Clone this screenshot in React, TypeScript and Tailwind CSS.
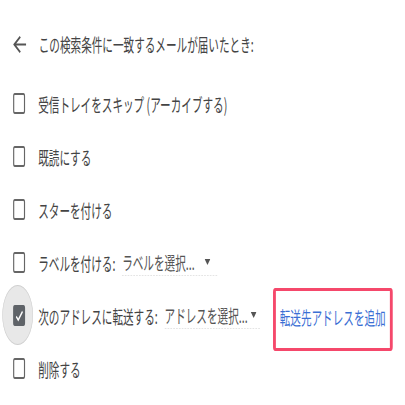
import React from "react";

const font = { fontFamily: '"Noto Sans CJK JP", "Noto Sans", sans-serif' };

const Box = () => (
  <div className="ml-[23px] w-[21px] h-[21px] rounded-[3px] border-2 border-[#666]" />
);

const Dropdown = ({ text, arrowGap }: { text: string; arrowGap: string }) => (
  <div className="flex items-center w-[167px] h-[26px] border-b border-dashed border-[#ddd] box-content">
    <span className="text-[#555]">{text}</span>
    <svg width="10" height="6" viewBox="0 0 10 6" className={`ml-auto ${arrowGap}`}>
      <path d="M0 0 L10 0 L5 6 Z" fill="#555" />
    </svg>
  </div>
);

const rows = ["受信トレイをスキップ (アーカイブする)", "既読にする", "スターを付ける"];

export default function App() {
  return (
    <div className="w-[405px] h-[405px] overflow-hidden bg-white">
      <div
        className="w-[710px] origin-top-left scale-x-[0.57] text-[18.6px] leading-[26px] text-[#444]"
        style={font}
      >
        {/* Header */}
        <div className="mt-[24px] h-[40px] flex items-center">
          <svg
            width="23"
            height="17"
            viewBox="0 0 16 16"
            preserveAspectRatio="none"
            className="ml-[23px]"
          >
            <path d="M16 7H3.8l5.6-5.6L8 0 0 8l8 8 1.4-1.4L3.8 9H16z" fill="#555" />
          </svg>
          <span className="ml-[22px]">この検索条件に一致するメールが届いたとき:</span>
        </div>

        {/* Actions */}
        <div className="mt-[13px] flex flex-col">
          {rows.map((r) => (
            <div key={r} className="h-[53px] flex items-center">
              <Box />
              <span className="ml-[23px]">{r}</span>
            </div>
          ))}

          <div className="h-[53px] flex items-center">
            <Box />
            <span className="ml-[23px]">ラベルを付ける:</span>
            <div className="ml-[12px]">
              <Dropdown text="ラベルを選択..." arrowGap="mr-[12px]" />
            </div>
          </div>

          <div className="h-[53px] flex items-center">
            <div className="relative w-[67px] h-full flex items-center">
              <div className="absolute left-[4px] top-[-4px] w-[54px] h-[60px] rounded-[50%] bg-[#e8e8e8] border border-[#cfcfcf]" />
              <div className="relative ml-[23px] w-[21px] h-[21px] rounded-[3px] bg-[#5f6368] flex items-center justify-center">
                <svg width="14" height="12" viewBox="0 0 14 12">
                  <path d="M1.5 6.5 L5 10 L12.5 1.5" stroke="#fff" strokeWidth="2" fill="none" />
                </svg>
              </div>
            </div>
            <span>次のアドレスに転送する:</span>
            <div className="ml-[12px]">
              <Dropdown text="アドレスを選択..." arrowGap="mr-[6px]" />
            </div>
            <div className="self-start mt-[-1px] ml-[23px] w-[210px] h-[63px] rounded-[4px] border-y-[3px] border-x-[5px] border-[#f5486b] pl-[7px] pt-[13px]">
              <span className="text-[#3b6fd4]">転送先アドレスを追加</span>
            </div>
          </div>

          <div className="h-[53px] flex items-center">
            <Box />
            <span className="ml-[23px]">削除する</span>
          </div>
        </div>
      </div>
    </div>
  );
}
